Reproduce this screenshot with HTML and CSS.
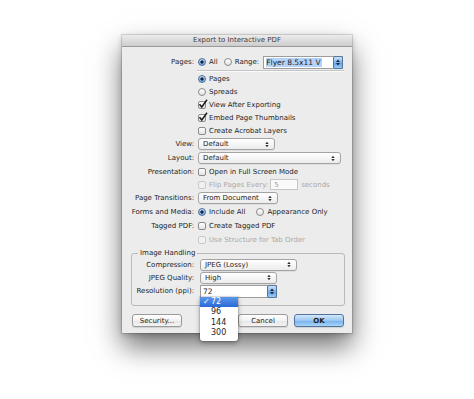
FILE: index.html
```html
<!DOCTYPE html>
<html lang="en">
<head>
  <meta charset="UTF-8">
  <title>Export to Interactive PDF</title>
  <link rel="stylesheet" href="styles.css">
</head>
<body>
  <div class="page">
    <div class="dialog">
      <div class="titlebar">Export to Interactive PDF</div>
      <div class="content">

        <!-- Pages -->
        <div class="row tall">
          <span class="label">Pages:</span>
          <div class="ctl">
            <span class="rb on"></span><span>All</span>
            <span class="rb gap"></span><span>Range:</span>
            <span class="combo range">
              <span class="combo-text"><span class="hl">Flyer 8.5x11 V</span></span>
              <span class="stepper"><svg width="4" height="7" viewBox="0 0 4 7"><path d="M0 3h4L2 0.5z M0 4h4L2 6.5z" fill="#1d2b45"/></svg></span>
            </span>
          </div>
        </div>
        <div class="sep"></div>

        <div class="row"><span></span><div class="ctl"><span class="rb on"></span><span>Pages</span></div></div>
        <div class="row"><span></span><div class="ctl"><span class="rb"></span><span>Spreads</span></div></div>
        <div class="row"><span></span><div class="ctl"><span class="cb"><svg class="tick" width="10" height="10" viewBox="0 0 10 10"><path d="M1.5 5.2 L3.8 8 L9 0.8" fill="none" stroke="#1a1a1a" stroke-width="1.5"/></svg></span><span>View After Exporting</span></div></div>
        <div class="row"><span></span><div class="ctl"><span class="cb"><svg class="tick" width="10" height="10" viewBox="0 0 10 10"><path d="M1.5 5.2 L3.8 8 L9 0.8" fill="none" stroke="#1a1a1a" stroke-width="1.5"/></svg></span><span>Embed Page Thumbnails</span></div></div>
        <div class="row"><span></span><div class="ctl"><span class="cb"></span><span>Create Acrobat Layers</span></div></div>

        <div class="row tall">
          <span class="label">View:</span>
          <div class="ctl"><span class="select w77">Default<svg class="arr" width="4" height="7" viewBox="0 0 4 7"><path d="M0.3 3h3.4L2 0.8z M0.3 4h3.4L2 6.2z" fill="#333"/></svg></span></div>
        </div>
        <div class="row tall">
          <span class="label">Layout:</span>
          <div class="ctl"><span class="select w143">Default<svg class="arr" width="4" height="7" viewBox="0 0 4 7"><path d="M0.3 3h3.4L2 0.8z M0.3 4h3.4L2 6.2z" fill="#333"/></svg></span></div>
        </div>
        <div class="row">
          <span class="label">Presentation:</span>
          <div class="ctl"><span class="cb"></span><span>Open in Full Screen Mode</span></div>
        </div>
        <div class="row dis">
          <span></span>
          <div class="ctl"><span class="cb"></span><span>Flip Pages Every:</span><span class="field">5</span><span>seconds</span></div>
        </div>
        <div class="row tall">
          <span class="label">Page Transitions:</span>
          <div class="ctl"><span class="select w80">From Document<svg class="arr" width="4" height="7" viewBox="0 0 4 7"><path d="M0.3 3h3.4L2 0.8z M0.3 4h3.4L2 6.2z" fill="#333"/></svg></span></div>
        </div>
        <div class="row tall">
          <span class="label">Forms and Media:</span>
          <div class="ctl"><span class="rb on"></span><span>Include All</span><span class="rb gap2"></span><span>Appearance Only</span></div>
        </div>
        <div class="row tall">
          <span class="label">Tagged PDF:</span>
          <div class="ctl"><span class="cb"></span><span>Create Tagged PDF</span></div>
        </div>
        <div class="row dis">
          <span></span>
          <div class="ctl"><span class="cb"></span><span>Use Structure for Tab Order</span></div>
        </div>

        <!-- Image Handling -->
        <fieldset class="group">
          <legend>Image Handling</legend>
          <div class="grow">
            <span class="label">Compression:</span>
            <div class="ctl"><span class="select w97">JPEG (Lossy)<svg class="arr" width="4" height="7" viewBox="0 0 4 7"><path d="M0.3 3h3.4L2 0.8z M0.3 4h3.4L2 6.2z" fill="#333"/></svg></span></div>
          </div>
          <div class="grow">
            <span class="label">JPEG Quality:</span>
            <div class="ctl"><span class="select w77">High<svg class="arr" width="4" height="7" viewBox="0 0 4 7"><path d="M0.3 3h3.4L2 0.8z M0.3 4h3.4L2 6.2z" fill="#333"/></svg></span></div>
          </div>
          <div class="grow tall">
            <span class="label">Resolution (ppi):</span>
            <div class="ctl">
              <span class="combo res">
                <span class="combo-text">72</span>
                <span class="stepper"><svg width="4" height="7" viewBox="0 0 4 7"><path d="M0 3h4L2 0.5z M0 4h4L2 6.5z" fill="#1d2b45"/></svg></span>
                <div class="menu">
                  <div class="item hi"><span class="chk">✓</span>72</div>
                  <div class="item"><span class="chk"></span>96</div>
                  <div class="item"><span class="chk"></span>144</div>
                  <div class="item"><span class="chk"></span>300</div>
                </div>
              </span>
            </div>
          </div>
        </fieldset>

        <div class="buttons">
          <button class="btn">Security...</button>
          <button class="btn cancel">Cancel</button>
          <button class="btn ok">OK</button>
        </div>

      </div>
    </div>
  </div>
</body>
</html>
```

FILE: styles.css
```css
* {
  box-sizing: border-box;
}

body {
  margin: 0;
  background-color: #fff;
  font-family: "DejaVu Sans", sans-serif;
  font-size: 7px;
  color: #1e1e1e;
}

.page {
  min-height: 399px;
  padding: 35px 0 0 122px;
}

.dialog {
  width: 230px;
  background-color: #ececec;
  box-shadow: 0 14px 26px rgba(0,0,0,0.55), 0 2px 6px rgba(0,0,0,0.2), 0 0 0 1px rgba(0,0,0,0.12);
}

.titlebar {
  height: 12px;
  line-height: 11px;
  text-align: center;
  color: #3c3c3c;
  background: linear-gradient(#ececec, #cdcdcd);
  border-bottom: 1px solid #999;
}

.content {
  padding: 8px 0 6px;
}

.row {
  display: grid;
  grid-template-columns: 72px 1fr;
  column-gap: 3px;
  align-items: center;
  height: 13px;
}

.row.tall, .grow.tall {
  height: 14px;
}

.label {
  text-align: right;
  white-space: nowrap;
}

.ctl {
  display: flex;
  align-items: center;
  gap: 3px;
  white-space: nowrap;
}

.sep {
  height: 2px;
  margin: 1px 8px 0 75px;
  border-top: 1px solid #c4c4c4;
  border-bottom: 1px solid #fafafa;
}

/* checkboxes and radios */
.cb {
  position: relative;
  flex: none;
  width: 8px;
  height: 8px;
  margin-left: 1px;
  border: 1px solid #8a8a8a;
  border-radius: 2px;
  background: linear-gradient(#fff, #e3e3e3);
}

.tick {
  position: absolute;
  left: -1px;
  top: -3px;
  overflow: visible;
}

.rb {
  flex: none;
  width: 8px;
  height: 8px;
  margin-left: 1px;
  border: 1px solid #8a8a8a;
  border-radius: 50%;
  background: linear-gradient(#fff, #e2e2e2);
}

.rb.on {
  border-color: #4c6e9e;
  background: radial-gradient(circle, #15213a 0, #15213a 1.3px, transparent 1.9px), linear-gradient(#c6def7, #6fa7e3);
}

.rb.gap {
  margin-left: 3px;
}

.rb.gap2 {
  margin-left: 8px;
}

.dis {
  color: #a9a9a9;
}

.dis .cb {
  border-color: #c9c9c9;
  background: #f1f1f1;
}

.field {
  width: 28px;
  height: 11px;
  line-height: 10px;
  margin-left: -1px;
  padding-left: 3px;
  border: 1px solid #c6c6c6;
  background-color: #fafafa;
  color: #9c9c9c;
}

/* popup buttons */
.select {
  position: relative;
  display: flex;
  align-items: center;
  justify-content: space-between;
  height: 12px;
  margin-left: 1px;
  padding: 0 5px 0 4px;
  border: 1px solid #a3a3a3;
  border-radius: 3px;
  background: linear-gradient(#fff, #ececec);
  box-shadow: 0 1px 0 rgba(0,0,0,0.06);
}

.w77 { width: 77px; }
.w80 { width: 80px; }
.w97 { width: 97px; }
.w143 { width: 143px; }

/* combo boxes with blue stepper */
.combo {
  position: relative;
  display: flex;
  height: 13px;
  border: 1px solid #9c9c9c;
  background-color: #fff;
}

.combo.range {
  width: 80px;
  margin-left: 1px;
}

.combo.res {
  width: 77px;
  margin-left: 1px;
}

.combo-text {
  flex: 1;
  padding-left: 2px;
  line-height: 11px;
  font-size: 7.5px;
}

.hl {
  background-color: #b3d2f6;
  padding-right: 1px;
}

.stepper {
  display: flex;
  align-items: center;
  justify-content: center;
  width: 10px;
  margin: -1px -1px -1px 0;
  border: 1px solid #55779f;
  border-radius: 2px;
  background: linear-gradient(#cde3fa, #7fb4ea 50%, #5c9de2 51%, #9fcbf4);
}

/* image handling group */
.group {
  margin: 2px 7px 0 9px;
  padding: 0 0 7px 0;
  min-width: 0;
  border: 1px solid #b9b9b9;
  border-radius: 3px;
}

.group legend {
  margin-left: 6px;
  padding: 0 2px;
  line-height: 10px;
}

.grow {
  display: grid;
  grid-template-columns: 62px 1fr;
  column-gap: 5px;
  align-items: center;
  height: 13px;
}

/* popup menu */
.menu {
  position: absolute;
  top: 100%;
  left: -1px;
  z-index: 2;
  width: 38px;
  padding-bottom: 2px;
  background-color: #fff;
  border-radius: 0 0 3px 3px;
  box-shadow: 0 2px 5px rgba(0,0,0,0.35), 0 0 0 1px rgba(0,0,0,0.1);
  font-size: 8px;
}

.item {
  display: flex;
  height: 10.5px;
  line-height: 10.5px;
  padding-left: 3px;
}

.item.hi {
  color: #fff;
  background: linear-gradient(#5b97ea, #2a69d6);
}

.chk {
  width: 8px;
}

/* buttons */
.buttons {
  display: flex;
  margin-top: 8px;
  padding: 0 8px 0 10px;
}

.btn {
  width: 50px;
  height: 13px;
  padding: 0;
  font-family: inherit;
  font-size: 7px;
  color: #1e1e1e;
  border: 1px solid #9a9a9a;
  border-radius: 3px;
  background: linear-gradient(#fff, #f2f2f2 50%, #e6e6e6 51%, #f3f3f3);
  box-shadow: 0 1px 1px rgba(0,0,0,0.12);
}

.cancel {
  margin-left: auto;
}

.ok {
  margin-left: 6px;
  font-weight: bold;
  border-color: #52739f;
  background: linear-gradient(#d4e8fb, #9ac8f2 50%, #72b0ec 51%, #a9d4f7);
}
```
